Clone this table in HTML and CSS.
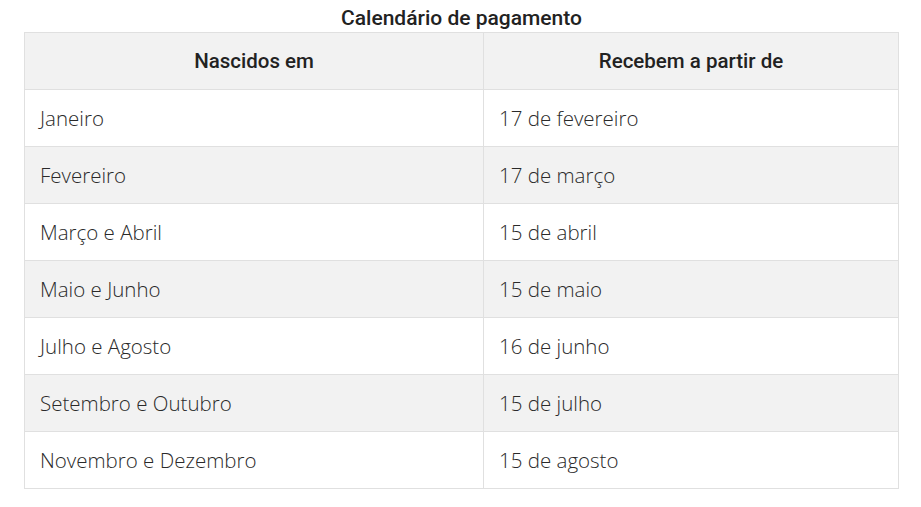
FILE: index.html
```html
<!DOCTYPE html>
<html lang="pt">
<head>
<meta charset="utf-8">
<title>Calendário de pagamento</title>
<link rel="stylesheet" href="styles.css">
</head>
<body>
<div class="wrap">
  <table class="cal">
    <caption>Calendário de pagamento</caption>
    <thead>
      <tr><th>Nascidos em</th><th>Recebem a partir de</th></tr>
    </thead>
    <tbody>
      <tr><td>Janeiro</td><td>17 de fevereiro</td></tr>
      <tr><td>Fevereiro</td><td>17 de março</td></tr>
      <tr><td>Março e Abril</td><td>15 de abril</td></tr>
      <tr><td>Maio e Junho</td><td>15 de maio</td></tr>
      <tr><td>Julho e Agosto</td><td>16 de junho</td></tr>
      <tr><td>Setembro e Outubro</td><td>15 de julho</td></tr>
      <tr><td>Novembro e Dezembro</td><td>15 de agosto</td></tr>
    </tbody>
  </table>
</div>
</body>
</html>
```
FILE: styles.css
```css
html, body { margin: 0; padding: 0; background: #fff; }
body { font-family: "Open Sans", "Liberation Sans", sans-serif; color: #333; }
.wrap { padding: 5px 23px 0 24px; }
.cal { width: 875px; border-collapse: collapse; table-layout: fixed; }
.cal caption {
  font-family: Roboto, "Liberation Sans", sans-serif;
  font-weight: 500; font-size: 21px; line-height: 27px; color: #222;
  text-align: center;
}
.cal th, .cal td { border: 1px solid #e0e0e0; height: 57px; padding: 0 15px; box-sizing: border-box; }
.cal th:first-child, .cal td:first-child { width: 459px; }
.cal th {
  font-family: Roboto, "Liberation Sans", sans-serif;
  font-weight: 500; font-size: 20.5px; color: #222; text-align: center;
  background: #f2f2f2;
}
.cal td { font-weight: 300; font-size: 20.5px; text-align: left; color: #2a2a2a; }
.cal tbody tr:nth-child(even) td { background: #f2f2f2; }
```
